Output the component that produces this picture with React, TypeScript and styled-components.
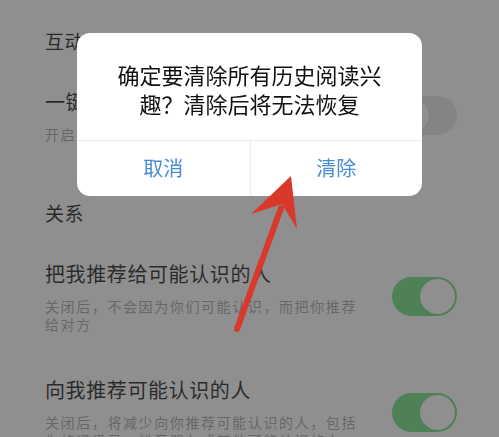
import React from "react";
import styled, { createGlobalStyle } from "styled-components";

const GlobalStyle = createGlobalStyle`
  html, body {
    margin: 0;
    padding: 0;
    background: #ffffff;
  }
  body {
    font-family: "Noto Sans CJK SC", "Noto Sans", sans-serif;
    overflow: hidden;
  }
`;

const Page = styled.div`
  width: 499px;
  height: 437px;
  overflow: hidden;
  box-sizing: border-box;
  padding: 28px 42px 0 45px;
  background: #ffffff;
`;

const SectionTitle = styled.div<{ $spaced?: boolean }>`
  font-size: 19px;
  line-height: 26px;
  color: #111111;
  letter-spacing: 0.5px;
  margin-top: ${(p) => (p.$spaced ? "57px" : "0")};
  margin-bottom: 34px;
`;

const Row = styled.div`
  display: flex;
  align-items: center;
  justify-content: space-between;
  margin-bottom: 43px;
`;

const TextCol = styled.div`
  width: 318px;
  display: flex;
  flex-direction: column;
  gap: 9px;
`;

const RowTitle = styled.div`
  font-size: 20px;
  line-height: 28px;
  color: #111111;
  letter-spacing: 0.6px;
  white-space: nowrap;
`;

const RowDesc = styled.div`
  font-size: 14px;
  line-height: 18px;
  color: #a2a2a2;
  letter-spacing: 1.6px;
`;

const Switch = styled.div<{ $on?: boolean }>`
  flex: none;
  width: 65px;
  height: 39px;
  border-radius: 20px;
  box-sizing: border-box;
  padding: 2px;
  display: flex;
  justify-content: ${(p) => (p.$on ? "flex-end" : "flex-start")};
  background: ${(p) => (p.$on ? "#66e078" : "#e6e6e6")};
`;

const Knob = styled.span`
  width: 35px;
  height: 35px;
  border-radius: 50%;
  background: #ffffff;
  box-shadow: 0 0 0 1px rgba(0, 0, 0, 0.06);
`;

const Mask = styled.div`
  position: fixed;
  inset: 0;
  background: rgba(60, 60, 60, 0.576);
  display: flex;
  justify-content: center;
  align-items: flex-start;
  padding-top: 33px;
`;

const Dialog = styled.div`
  width: 345px;
  background: #ffffff;
  border-radius: 13px;
  overflow: hidden;
`;

const Message = styled.div`
  padding: 27px 30px 22px;
  text-align: center;
  font-size: 22px;
  line-height: 29px;
  color: #111111;
`;

const Actions = styled.div`
  display: grid;
  grid-template-columns: 1fr 1fr;
  border-top: 1px solid #ececec;
  height: 55px;
`;

const ActionButton = styled.button<{ $divided?: boolean }>`
  border: none;
  background: transparent;
  font-family: inherit;
  font-size: 20px;
  color: #4a8bd3;
  padding: 0;
  padding-bottom: 2px;
  border-left: ${(p) => (p.$divided ? "1px solid #ececec" : "none")};
`;

const Pointer = styled.svg`
  position: fixed;
  left: 0;
  top: 0;
  width: 499px;
  height: 437px;
  pointer-events: none;
`;

const settings = [
  {
    title: "把我推荐给可能认识的人",
    desc: "关闭后，不会因为你们可能认识，而把你推荐给对方",
  },
  {
    title: "向我推荐可能认识的人",
    desc: "关闭后，将减少向你推荐可能认识的人，包括你的通讯录，抖音朋友或其他可能认识的人",
  },
];

export default function App() {
  return (
    <>
      <GlobalStyle />
      <Page>
        <SectionTitle>互动</SectionTitle>
        <Row>
          <TextCol>
            <RowTitle>一键回关</RowTitle>
            <RowDesc>开启后，别人关注你时将自动回关</RowDesc>
          </TextCol>
          <Switch>
            <Knob />
          </Switch>
        </Row>
        <SectionTitle $spaced>关系</SectionTitle>
        {settings.map((s) => (
          <Row key={s.title}>
            <TextCol>
              <RowTitle>{s.title}</RowTitle>
              <RowDesc>{s.desc}</RowDesc>
            </TextCol>
            <Switch $on>
              <Knob />
            </Switch>
          </Row>
        ))}
      </Page>
      <Mask>
        <Dialog>
          <Message>
            确定要清除所有历史阅读兴
            <br />
            趣？清除后将无法恢复
          </Message>
          <Actions>
            <ActionButton>取消</ActionButton>
            <ActionButton $divided>清除</ActionButton>
          </Actions>
        </Dialog>
      </Mask>
      <Pointer viewBox="0 0 499 437">
        <line
          x1="237"
          y1="329"
          x2="281"
          y2="208"
          stroke="#d8392b"
          strokeWidth="6"
          strokeLinecap="round"
        />
        <polygon points="291,176 297,229 282,204 251,214" fill="#d8392b" />
      </Pointer>
    </>
  );
}
